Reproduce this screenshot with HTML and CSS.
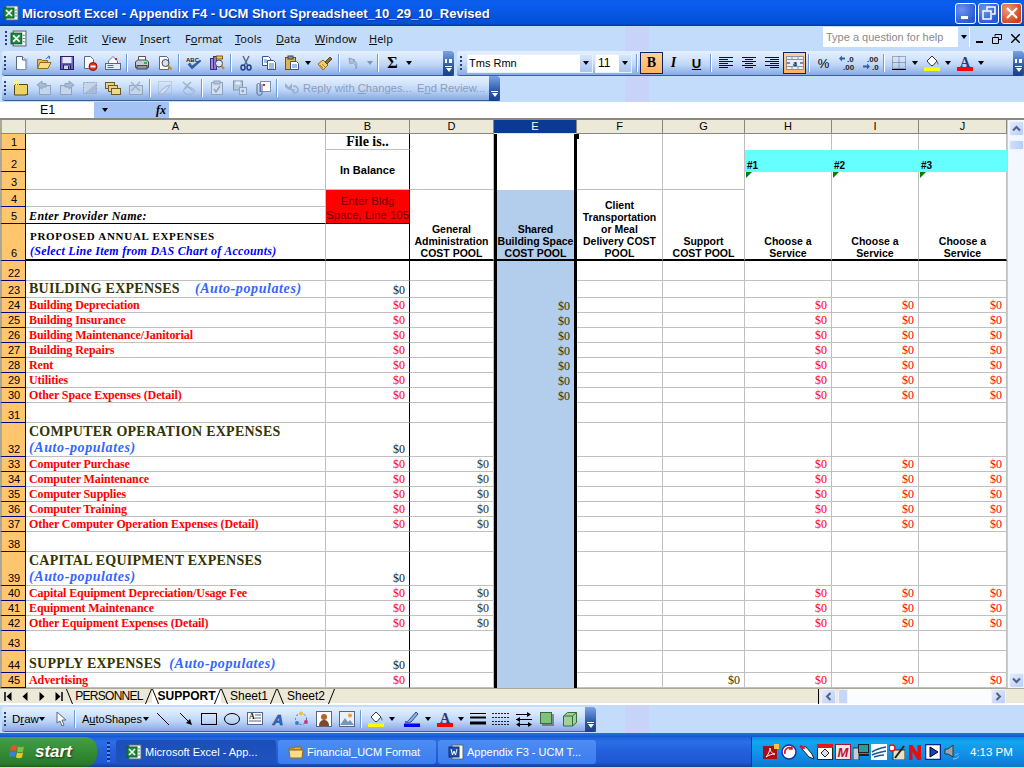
FILE: index.html
```html
<!DOCTYPE html>
<html lang="en">
<head>
<meta charset="utf-8">
<title>Microsoft Excel</title>
<link rel="stylesheet" href="styles.css">
</head>
<body>
<svg class="defs" width="0" height="0">
<symbol id="xl" viewBox="0 0 16 16"><rect x="3" y="1" width="12" height="14" fill="#fff" stroke="#567"/><rect x="1" y="3" width="10" height="10" fill="#1d8a3c" stroke="#0b5a22"/><path d="M3 5l6 6M9 5l-6 6" stroke="#fff" stroke-width="1.6"/><path d="M12 5h2M12 8h2M12 11h2" stroke="#3a9a55"/></symbol>
<symbol id="new" viewBox="0 0 16 16"><path d="M3.5 1.5h6l3.500 3.500v9.500h-9.500z" fill="#fff" stroke="#56688a"/><path d="M9.500 1.500v3.500h3.500" fill="#dfe8f6" stroke="#56688a"/><path d="M14 3v12H5" fill="none" stroke="#9db6dc"/></symbol>
<symbol id="open" viewBox="0 0 16 16"><path d="M1.500 13.500v-9h4l1 1h5v2" fill="#e7b94f" stroke="#8d6a1d"/><path d="M1.500 13.500l2.500-6h11l-3 6z" fill="#fbdc85" stroke="#8d6a1d"/><path d="M10 4c1-2 3-2.500 4-2M14 2l-2-1M14 2l-1 2" fill="none" stroke="#3e6f9f"/></symbol>
<symbol id="save" viewBox="0 0 16 16"><rect x="1.500" y="1.500" width="13" height="13" fill="#6a62c6" stroke="#26225f"/><rect x="3.500" y="2" width="9" height="6" fill="#e9e8f8"/><rect x="4.500" y="10" width="7" height="4.500" fill="#d4d4dc" stroke="#26225f"/><rect x="9" y="11" width="1.500" height="3" fill="#26225f"/></symbol>
<symbol id="perm" viewBox="0 0 16 16"><path d="M2.500 1.500h6l3 3v9h-9z" fill="#fff" stroke="#56688a"/><circle cx="11" cy="11.500" r="4" fill="#e5301c" stroke="#8b1208"/><rect x="8.500" y="10.500" width="5" height="2" fill="#fff"/></symbol>
<symbol id="mail" viewBox="0 0 16 16"><path d="M3.500 6l4.500-4.500 4.500 4.500v3h-9z" fill="#fff" stroke="#66789a"/><rect x="10" y="3" width="2" height="2" fill="#d23"/><rect x=".5" y="8.500" width="15" height="6" fill="#e6ecf6" stroke="#56688a"/><rect x="2.500" y="10" width="6" height="1" fill="#56688a"/><rect x="2.500" y="12" width="6" height="1" fill="#56688a"/></symbol>
<symbol id="print" viewBox="0 0 16 16"><path d="M4.500 5.500v-4h7v4" fill="#fff" stroke="#555"/><path d="M1.500 7l2-2h9l2 2v5.500h-13z" fill="#c6ccd6" stroke="#444"/><rect x="3" y="10.500" width="10" height="3.500" fill="#8e96a4" stroke="#444"/><rect x="10" y="7" width="3" height="2" fill="#16c42c"/></symbol>
<symbol id="prev" viewBox="0 0 16 16"><path d="M2.500 1.500h7l2 2v11h-9z" fill="#fff" stroke="#56688a"/><circle cx="8.500" cy="8" r="3.500" fill="#cfe0f5" stroke="#444"/><path d="M11 10.500l3.500 4" stroke="#c28a24" stroke-width="2"/></symbol>
<symbol id="res" viewBox="0 0 16 16"><rect x="1.500" y="3.500" width="3" height="11" fill="#9a86d4" stroke="#3d2f80"/><rect x="4.500" y="1.500" width="3" height="13" fill="#8e7ad0" stroke="#3d2f80"/><rect x="7.500" y="1" width="6" height="3" fill="#ecc766" stroke="#806018"/><circle cx="10" cy="8.500" r="3.500" fill="#dfeafa" stroke="#445"/><path d="M12.500 11l2.500 3" stroke="#c28a24" stroke-width="2"/></symbol>
<symbol id="cut" viewBox="0 0 16 16"><path d="M5 1l4.500 9M11 1L6.500 10" stroke="#5a6a80" stroke-width="1.500"/><ellipse cx="5" cy="12.500" rx="2" ry="2.500" fill="none" stroke="#233f8c" stroke-width="1.500"/><ellipse cx="11" cy="12.500" rx="2" ry="2.500" fill="none" stroke="#233f8c" stroke-width="1.500"/></symbol>
<symbol id="copy" viewBox="0 0 16 16"><path d="M1.500 1.500h6l2 2v7h-8z" fill="#fff" stroke="#35558f"/><path d="M6.500 5.500h6l2 2v7h-8z" fill="#fff" stroke="#35558f"/><path d="M8 9h5M8 11h5M8 13h5M3 5h3M3 7h3" stroke="#4a78c4"/></symbol>
<symbol id="paste" viewBox="0 0 16 16"><rect x="1.500" y="2.500" width="10" height="12" fill="#e2b24c" stroke="#6f5110"/><rect x="4" y="1" width="5" height="3" fill="#8a94a8" stroke="#444"/><path d="M6.500 6.500h6l2 2v6h-8z" fill="#fff" stroke="#35558f"/><path d="M8 10h5M8 12h5" stroke="#4a78c4"/></symbol>
<symbol id="brush" viewBox="0 0 16 16"><path d="M1 9l5-4 5 5-5 5z" fill="#f3cf6a" stroke="#8b6b1d"/><path d="M8 7l5-5 2 2-5 5z" fill="#8c6a3a" stroke="#5d4520"/><path d="M3 10l3 3M5 9l3 3" stroke="#b88a2a"/></symbol>
<symbol id="undo" viewBox="0 0 16 16"><path d="M4 9l-1-6 6 2-2 1c3 0 5 2 3 8 0-4-2-6-4-6z" fill="#b4c4dc" stroke="#8da0bf"/></symbol>
<symbol id="note" viewBox="0 0 16 16"><path d="M1.500 4.500h13v9l-1.500 1.500h-11.500z" fill="#efd362" stroke="#54471a"/><path d="M12 15l3-2v2z" fill="#54471a"/><path d="M3.500 0v6M.5 3h6M1 1l5 4M6 1L1 5" stroke="#fff37a"/></symbol>
<symbol id="gprev" viewBox="0 0 16 16"><rect x="3.500" y="5.500" width="11" height="9" fill="#c6d6ea" stroke="#8ea3c0"/><path d="M1 5l5-4v2.500h4v3.500H6v2z" fill="#a9bcd6" stroke="#8ea3c0"/></symbol>
<symbol id="gnext" viewBox="0 0 16 16"><rect x="1.500" y="5.500" width="11" height="9" fill="#c6d6ea" stroke="#8ea3c0"/><path d="M15 5l-5-4v2.500h-4v3.500h4v2z" fill="#a9bcd6" stroke="#8ea3c0"/></symbol>
<symbol id="gshow" viewBox="0 0 16 16"><rect x="1.500" y="2.500" width="13" height="11" fill="#c6d6ea" stroke="#8ea3c0" stroke-dasharray="2 1"/><path d="M2 13L14 4v9z" fill="#a9bcd6"/></symbol>
<symbol id="folders" viewBox="0 0 16 16"><rect x=".5" y="2.500" width="9" height="6" fill="#ecd07c" stroke="#6b5a22"/><rect x="3.500" y="5.500" width="9" height="6" fill="#ecd07c" stroke="#6b5a22"/><rect x="6.500" y="8.500" width="9" height="6" fill="#f0d98c" stroke="#6b5a22"/></symbol>
<symbol id="gdel" viewBox="0 0 16 16"><rect x="1.500" y="5.500" width="13" height="9" fill="#c6d6ea" stroke="#8ea3c0"/><path d="M3 2l9 9M12 2l-9 9" stroke="#9fb2cd" stroke-width="1.500"/></symbol>
<symbol id="gink" viewBox="0 0 16 16"><rect x="1.500" y="1.500" width="13" height="13" fill="none" stroke="#9fb2cd" stroke-dasharray="1 1"/><path d="M2 14c3-5 7-8 11-9-2 4-5 8-9 9z" fill="#d4e0f0" stroke="#9fb2cd"/></symbol>
<symbol id="gerase" viewBox="0 0 16 16"><path d="M3 2l10 9M11 2L4 9" stroke="#9fb2cd" stroke-width="1.500"/><ellipse cx="9" cy="11" rx="5.500" ry="3.500" fill="none" stroke="#9fb2cd"/></symbol>
<symbol id="gclip" viewBox="0 0 16 16"><rect x="2.500" y="2.500" width="11" height="12" fill="#d4e0f0" stroke="#8ea3c0"/><rect x="5" y="1" width="6" height="3" fill="#b7c7dd" stroke="#8ea3c0"/><path d="M5 9l2 3 4-6" fill="none" stroke="#8ea3c0" stroke-width="1.500"/></symbol>
<symbol id="gsave" viewBox="0 0 16 16"><rect x="1.500" y="1" width="9" height="9" fill="#b7c7dd" stroke="#7f93b0"/><rect x="3.500" y="1.500" width="5" height="3" fill="#e6eef8"/><rect x="7.500" y="7.500" width="7" height="7" fill="#d4e0f0" stroke="#8ea3c0"/><path d="M9 11h3M11 9.500v3" stroke="#7f93b0"/></symbol>
<symbol id="attach" viewBox="0 0 16 16"><rect x="5.500" y="1.500" width="10" height="10" fill="#fff" stroke="#7f93b0"/><path d="M8 5h2" stroke="#d23" stroke-width="2"/><path d="M7 4v9c0 3-5 3-5 0V5c0-2 3-2 3 0v7" fill="none" stroke="#56688a"/></symbol>
<symbol id="reply" viewBox="0 0 16 16"><path d="M1 3l4 4 3-4v7H5L1 7z" fill="#9db0cb"/><path d="M9 6c3 0 5 1 5 4 0 2-2 3-4 3l-2-3h3" fill="none" stroke="#9db0cb" stroke-width="1.600"/></symbol>
<symbol id="al" viewBox="0 0 16 14"><path d="M1 1.500h14M1 3.500h9M1 5.500h14M1 7.500h9M1 9.500h14M1 11.500h9" stroke="#111"/></symbol>
<symbol id="ac" viewBox="0 0 16 14"><path d="M1 1.500h14M4 3.500h8M1 5.500h14M4 7.500h8M1 9.500h14M4 11.500h8" stroke="#111"/></symbol>
<symbol id="ar" viewBox="0 0 16 14"><path d="M1 1.500h14M6 3.500h9M1 5.500h14M6 7.500h9M1 9.500h14M6 11.500h9" stroke="#111"/></symbol>
<symbol id="bord" viewBox="0 0 16 16"><path d="M1.500 1.500h13v12h-13zM8 1.500v12M1.500 7.500h13" fill="none" stroke="#667" stroke-dasharray="1 1"/><path d="M1 14.500h14" stroke="#000"/></symbol>
<symbol id="fill" viewBox="0 0 16 16"><path d="M3 6l5-5 5 5-4 4.500H7z" fill="#fff" stroke="#333"/><path d="M13 6c1.500 1 2 3 1 4-1-1-1-3-1-4z" fill="#3a7bd5"/><rect y="12.500" width="16" height="3.500" fill="#ff0"/></symbol>
<symbol id="lcol" viewBox="0 0 16 16"><path d="M1 11c2 0 3-1 4-2l7-8 2 2-7 8c-2 1-4 1-6 0z" fill="#8fb0e0" stroke="#2b4a8a"/><rect y="12.500" width="16" height="3.500" fill="#00f"/></symbol>
<symbol id="cursor" viewBox="0 0 16 16"><path d="M4 1v11l3-2 2 5 2-1-2-5h4z" fill="#fff" stroke="#56688a"/></symbol>
<symbol id="diag" viewBox="0 0 16 16"><circle cx="8" cy="8" r="5.500" fill="none" stroke="#56688a" stroke-dasharray="2 2"/><circle cx="8" cy="2.500" r="2" fill="#eec23a"/><circle cx="13" cy="11" r="2" fill="#c23a8a"/><circle cx="4" cy="12" r="2" fill="#3a7bd5"/></symbol>
<symbol id="clip" viewBox="0 0 16 16"><rect x=".5" y=".5" width="15" height="15" fill="#fff" stroke="#56688a"/><circle cx="8" cy="6" r="3" fill="#b5622e"/><path d="M3 15c0-5 3-6 5-6s5 1 5 6z" fill="#7a4a2a"/></symbol>
<symbol id="pic" viewBox="0 0 16 16"><rect x=".5" y=".5" width="15" height="15" fill="#e9f2fc" stroke="#56688a"/><path d="M1 14l5-7 3 4 2-2 4 5z" fill="#7a93b8"/><circle cx="11" cy="4.500" r="2" fill="#f0a030"/></symbol>
<symbol id="lstyle" viewBox="0 0 16 16"><path d="M0 2.500h16" stroke="#000"/><path d="M0 6.500h16" stroke="#000" stroke-width="2"/><path d="M0 12h16" stroke="#000" stroke-width="3"/></symbol>
<symbol id="dash" viewBox="0 0 18 16"><path d="M0 2.500h18M0 6.500h18M0 10.500h18M0 13.500h18" stroke="#222" stroke-dasharray="2 1"/></symbol>
<symbol id="arrows" viewBox="0 0 16 16"><path d="M0 3.500h14M0 8.500h16M2 13.500h12" stroke="#000"/><path d="M11 1l4 2.500-4 2.500zM4 6L0 8.500 4 11zM4 11l-4 2.500L4 16zM12 11l4 2.500-4 2.500z" fill="#000"/></symbol>
<symbol id="shadow" viewBox="0 0 16 16"><rect x="3" y="3" width="12" height="12" fill="#444" opacity=".55"/><rect x="1.500" y="1.500" width="11" height="11" fill="#7fc27a" stroke="#3a6a3a"/></symbol>
<symbol id="cube" viewBox="0 0 16 16"><path d="M1.500 5l4-3.500h9v10l-4 3.500h-9z" fill="#9fd29a" stroke="#3a6a3a"/><path d="M1.500 5h9v10M10.500 5l4-3.500" fill="none" stroke="#3a6a3a"/></symbol>
<symbol id="folderxp" viewBox="0 0 16 16"><path d="M1 4h5l1-1h6v3H1z" fill="#e2b23f" stroke="#8d6a1d"/><path d="M1 6h14l-1 8H2z" fill="#fbdc85" stroke="#8d6a1d"/></symbol>
<symbol id="wd" viewBox="0 0 16 16"><rect x="4" y="1" width="11" height="14" fill="#fff" stroke="#567"/><rect x="1" y="3" width="10" height="10" fill="#1f4fb0" stroke="#0f2c70"/><path d="M3 5l1.500 6 1.500-4 1.500 4L9 5" fill="none" stroke="#fff"/></symbol>
<symbol id="flag" viewBox="0 0 18 18"><path d="M2 3c2-1 4-1 6 0l-1 5c-2-1-4-1-6 0z" fill="#e8532b"/><path d="M9 3.500c2 1 4 1 6 0l-1 5c-2 1-4 1-6 0z" fill="#7dc242"/><path d="M1 9c2-1 4-1 6 0l-1 5c-2-1-4-1-6 0z" fill="#3a7fd8"/><path d="M8 9.500c2 1 4 1 6 0l-1 5c-2 1-4 1-6 0z" fill="#f6c81e"/></symbol>
<symbol id="t1" viewBox="0 0 16 16"><rect y="2" width="14" height="13" fill="#a80f10"/><path d="M3 13c2-2 4-6 4-9 0 3 2 6 5 6-3 0-6 1-9 3z" fill="none" stroke="#fff"/><path d="M11 0h5v5h-5z" fill="#f3c73a"/></symbol>
<symbol id="t2" viewBox="0 0 16 16"><circle cx="8" cy="8" r="7" fill="#fff" stroke="#1330b0" stroke-width="1.500"/><path d="M4 10a5 5 0 0 1 7-6M11 1v4H8" fill="none" stroke="#e01818" stroke-width="1.500"/></symbol>
<symbol id="t3" viewBox="0 0 16 16"><path d="M1 2l6 1 6 7 2 5-5-2-6-7z" fill="#fff" stroke="#222"/><path d="M1 2l4 0 1 3H3z" fill="#e01818"/></symbol>
<symbol id="t4" viewBox="0 0 16 16"><rect x=".5" y=".5" width="15" height="15" fill="#fff" stroke="#222"/><rect y="0" width="16" height="4" fill="#e01818"/><path d="M8 5l4 4-4 4-4-4z" fill="#dde" stroke="#222"/></symbol>
<symbol id="t6" viewBox="0 0 16 16"><rect y="4" width="6" height="12" fill="#c8ccd4" stroke="#333"/><rect x="5.500" y=".5" width="10" height="8" fill="#2f9a9a" stroke="#222"/><path d="M6 11h10" stroke="#222" stroke-width="2"/></symbol>
<symbol id="t7" viewBox="0 0 16 16"><rect width="16" height="16" fill="#fff"/><path d="M1 8c4-3 9-4 14-5M1 11c4-2 9-3 14-4M3 13c3-1 7-2 10-2" fill="none" stroke="#1a5a9a" stroke-width="1.600"/></symbol>
<symbol id="t8" viewBox="0 0 16 16"><rect x="4" y="6" width="12" height="10" fill="#e8e2c8" stroke="#333"/><path d="M6 14L15 2" stroke="#222" stroke-width="2"/><circle cx="3" cy="4" r="3" fill="#fff" stroke="#e01818" stroke-width="1.500"/></symbol>
<symbol id="t9" viewBox="0 0 16 16"><path d="M2 1h3.500l5 8V1H14v15h-3.500l-5-8v8H2z" fill="#e01010"/></symbol>
<symbol id="t10" viewBox="0 0 16 16"><rect x=".5" y=".5" width="15" height="15" fill="#fff" stroke="#10208a" stroke-width="1.500"/><path d="M5 3l8 5-8 5z" fill="#1540c8" stroke="#000"/></symbol>
<symbol id="t11" viewBox="0 0 16 16"><path d="M2 5h3l5-4v12L5 10H2z" fill="#9aa4ae" stroke="#333"/><path d="M12 11c2 0 3-1 3-2M10 15c3 0 5-1 6-3" fill="none" stroke="#9ac0f0"/></symbol>
<symbol id="nfirst" viewBox="0 0 9 9"><path d="M1.500 0v9" stroke="#000" stroke-width="1.500"/><path d="M8 0v9L3 4.500z" fill="#000"/></symbol>
<symbol id="nprev" viewBox="0 0 9 9"><path d="M7 0v9L2 4.500z" fill="#000"/></symbol>
<symbol id="nnext" viewBox="0 0 9 9"><path d="M2 0v9l5-4.500z" fill="#000"/></symbol>
<symbol id="nlast" viewBox="0 0 9 9"><path d="M1 0v9l5-4.500z" fill="#000"/><path d="M7.500 0v9" stroke="#000" stroke-width="1.500"/></symbol>
</svg>

<div class="app">
  <header class="title">
    <svg class="ticon"><use href="#xl"/></svg>
    <span class="ttext">Microsoft Excel - Appendix F4 - UCM Short Spreadsheet_10_29_10_Revised</span>
    <div class="caps">
      <button class="cap"><span class="minbar"></span></button>
      <button class="cap"><svg width="14" height="14" viewBox="0 0 14 14"><path d="M5 4V1h8v7h-3M1 5h8v8H1z" fill="none" stroke="#fff" stroke-width="1.500"/></svg></button>
      <button class="cap close"><svg width="12" height="12" viewBox="0 0 12 12"><path d="M1 1l10 10M11 1L1 11" stroke="#fff" stroke-width="2.200"/></svg></button>
    </div>
  </header>

  <div class="cmd">
    <nav class="menu">
      <i class="handle mh"></i>
      <svg class="micon"><use href="#xl"/></svg>
      <span class="mi m1"><u>F</u>ile</span>
      <span class="mi m2"><u>E</u>dit</span>
      <span class="mi m3"><u>V</u>iew</span>
      <span class="mi m4"><u>I</u>nsert</span>
      <span class="mi m5">F<u>o</u>rmat</span>
      <span class="mi m6"><u>T</u>ools</span>
      <span class="mi m7"><u>D</u>ata</span>
      <span class="mi m8"><u>W</u>indow</span>
      <span class="mi m9"><u>H</u>elp</span>
      <div class="ask"><span class="asktxt">Type a question for help</span><b class="askdd"><i class="tri-d"></i></b></div>
      <div class="wctl">
        <span class="wmin"></span>
        <svg width="10" height="10" viewBox="0 0 10 10"><path d="M3 2.500V.5h6.500v5H7M.5 3.500h6v6h-6z" fill="none" stroke="#000"/></svg>
        <svg width="9" height="9" viewBox="0 0 9 9"><path d="M0 0l9 9M9 0L0 9" stroke="#000" stroke-width="1.500"/></svg>
      </div>
    </nav>
    <div class="row">
      <div class="tb tb-std">
        <i class="handle"></i>
        <span class="b"><svg><use href="#new"/></svg></span>
        <span class="b"><svg><use href="#open"/></svg></span>
        <span class="b"><svg><use href="#save"/></svg></span>
        <span class="b"><svg><use href="#perm"/></svg></span>
        <span class="b"><svg><use href="#mail"/></svg></span>
        <i class="sep"></i>
        <span class="b"><svg><use href="#print"/></svg></span>
        <span class="b"><svg><use href="#prev"/></svg></span>
        <i class="sep"></i>
        <span class="b"><svg viewBox="0 0 16 16"><text x="0" y="6.500" class="svt">ABC</text><path d="M2 9.500l4 4.500 9-8-1-1-8 6-2-3z" fill="#2f5fb2" stroke="#1b3b78" stroke-width=".5"/></svg></span>
        <span class="b"><svg><use href="#res"/></svg></span>
        <i class="sep"></i>
        <span class="b"><svg><use href="#cut"/></svg></span>
        <span class="b"><svg><use href="#copy"/></svg></span>
        <span class="b"><svg><use href="#paste"/></svg></span>
        <span class="dd"><i class="tri-d"></i></span>
        <span class="b"><svg><use href="#brush"/></svg></span>
        <i class="sep"></i>
        <span class="b"><svg><use href="#undo"/></svg></span>
        <span class="dd"><i class="tri-d grey"></i></span>
        <i class="sep"></i>
        <span class="b sigma">Σ</span>
        <span class="dd"><i class="tri-d"></i></span>
        <span class="chev"><i class="cv-top"></i><i class="cv-line"></i><i class="tri-d wh"></i></span>
      </div>
      <div class="tb tb-fmt">
        <i class="handle"></i>
        <div class="combo font"><span>Tms Rmn</span><b class="cdd"><i class="tri-d"></i></b></div>
        <div class="combo size"><span>11</span><b class="cdd"><i class="tri-d"></i></b></div>
        <i class="sep"></i>
        <span class="b on bold">B</span>
        <span class="b ital">I</span>
        <span class="b und">U</span>
        <i class="sep"></i>
        <span class="b"><svg class="al"><use href="#al"/></svg></span>
        <span class="b"><svg class="al"><use href="#ac"/></svg></span>
        <span class="b"><svg class="al"><use href="#ar"/></svg></span>
        <span class="b on"><svg class="wide" viewBox="0 0 18 16"><rect x=".5" y="1.500" width="17" height="13" fill="#e8eef8" stroke="#8a96a8"/><path d="M0 4.500h18M0 11.500h18M6 1v3M12 1v3M6 12v3M12 12v3" stroke="#8a96a8"/><text x="9" y="10.600" class="svb" text-anchor="middle">a</text><path d="M1 8h3M17 8h-3" stroke="#223"/></svg></span>
        <i class="sep"></i>
        <span class="b pct">%</span>
        <span class="b"><svg class="wide" viewBox="0 0 18 16"><text x="9" y="6.500" class="svd">.0</text><text x="5" y="14.500" class="svd">.00</text><path d="M1 3.500l3-3v2h3v2H4v2z" fill="#2f5fb2"/></svg></span>
        <span class="b"><svg class="wide" viewBox="0 0 18 16"><text x="6" y="6.500" class="svd">.00</text><text x="11" y="14.500" class="svd">.0</text><path d="M9 11.500l-3-3v2H2v2h4v2z" fill="#2f5fb2"/></svg></span>
        <i class="sep"></i>
        <span class="b"><svg><use href="#bord"/></svg></span>
        <span class="dd"><i class="tri-d"></i></span>
        <span class="b"><svg><use href="#fill"/></svg></span>
        <span class="dd"><i class="tri-d"></i></span>
        <span class="b"><svg viewBox="0 0 16 16"><text x="8" y="11.500" class="sva" text-anchor="middle">A</text><rect y="12" width="16" height="4" fill="#f00"/></svg></span>
        <span class="dd"><i class="tri-d"></i></span>
        <span class="chev"><i class="cv-top"></i><i class="cv-line"></i><i class="tri-d wh"></i></span>
      </div>
    </div>
    <div class="row">
      <div class="tb tb-rev">
        <i class="handle"></i>
        <span class="b"><svg><use href="#note"/></svg></span>
        <span class="b"><svg><use href="#gprev"/></svg></span>
        <span class="b"><svg><use href="#gnext"/></svg></span>
        <span class="b"><svg><use href="#gshow"/></svg></span>
        <span class="b"><svg><use href="#folders"/></svg></span>
        <span class="b"><svg><use href="#gdel"/></svg></span>
        <i class="sep"></i>
        <span class="b"><svg><use href="#gink"/></svg></span>
        <span class="b"><svg><use href="#gerase"/></svg></span>
        <i class="sep"></i>
        <span class="b"><svg><use href="#gclip"/></svg></span>
        <span class="b"><svg><use href="#gsave"/></svg></span>
        <span class="b"><svg><use href="#attach"/></svg></span>
        <i class="sep"></i>
        <span class="b"><svg><use href="#reply"/></svg></span>
        <span class="gtxt rc">Reply with <u>C</u>hanges...</span>
        <span class="gtxt">E<u>n</u>d Review...</span>
        <span class="chev"><i class="cv-line"></i><i class="tri-d wh"></i></span>
      </div>
    </div>
  </div>

  <div class="fbar">
    <div class="namebox">E1</div>
    <div class="fbmid"><i class="tri-d"></i><span class="fx">fx</span></div>
    <div class="finput"></div>
  </div>

  <main class="sheet">
    <table class="grid">
      <colgroup><col class="c0"><col class="ca"><col class="cb"><col class="cd"><col class="ce"><col class="cf"><col class="cg"><col class="ch"><col class="ci"><col class="cj"></colgroup>
      <tr class="rh"><th class="corner"></th><th class="col">A</th><th class="col">B</th><th class="col">D</th><th class="col sel">E</th><th class="col">F</th><th class="col">G</th><th class="col">H</th><th class="col">I</th><th class="col">J</th></tr>
      <tr class="r16"><th>1</th><td rowspan="3"></td><td class="fileis bk">File is..</td><td rowspan="3"></td><td rowspan="3" class="e1"><span class="fillh"></span></td><td rowspan="3"></td><td rowspan="3"></td><td class="nb"></td><td class="nb"></td><td class="nb"></td></tr>
      <tr class="r22"><th>2</th><td rowspan="2" class="inbal bk">In Balance</td><td class="cy">#1</td><td class="cy">#2</td><td class="cy">#3</td></tr>
      <tr class="r18"><th>3</th><td class="nb tp"><i class="cmt"></i></td><td class="nb tp"><i class="cmt"></i></td><td class="nb tp"><i class="cmt"></i></td></tr>
      <tr class="r17"><th>4</th><td></td><td rowspan="2" class="red bk">Enter Bldg<br>Space, Line 105</td><td rowspan="3" class="hd">General<br>Administration<br>COST POOL</td><td rowspan="3" class="e hd">Shared<br>Building Space<br>COST POOL</td><td rowspan="3" class="hd">Client<br>Transportation<br>or Meal<br>Delivery COST<br>POOL</td><td rowspan="3" class="hd">Support<br>COST POOL</td><td rowspan="3" class="hd">Choose a<br>Service</td><td rowspan="3" class="hd">Choose a<br>Service</td><td rowspan="3" class="hd">Choose a<br>Service</td></tr>
      <tr class="r17"><th>5</th><td class="prov">Enter Provider Name:</td></tr>
      <tr class="r37"><th>6</th><td class="prop"><span class="pa">PROPOSED ANNUAL EXPENSES</span><br><span class="ps">(Select Line Item from DAS Chart of Accounts)</span></td><td class="thick bk"></td></tr>
      <tr class="r20"><th>22</th><td></td><td class="bk"></td><td></td><td class="e"></td><td></td><td></td><td></td><td></td><td></td></tr>
      <tr class="r17"><th>23</th><td class="sec">BUILDING EXPENSES<span class="auto a1">(Auto-populates)</span></td><td class="n k bk">$0</td><td></td><td class="e"></td><td></td><td></td><td></td><td></td><td></td></tr>
      <tr class="r15"><th>24</th><td class="l">Building Depreciation</td><td class="n bk">$0</td><td></td><td class="e n o">$0</td><td></td><td></td><td class="n">$0</td><td class="n">$0</td><td class="n">$0</td></tr>
      <tr class="r15"><th>25</th><td class="l">Building Insurance</td><td class="n bk">$0</td><td></td><td class="e n o">$0</td><td></td><td></td><td class="n">$0</td><td class="n">$0</td><td class="n">$0</td></tr>
      <tr class="r15"><th>26</th><td class="l">Building Maintenance/Janitorial</td><td class="n bk">$0</td><td></td><td class="e n o">$0</td><td></td><td></td><td class="n">$0</td><td class="n">$0</td><td class="n">$0</td></tr>
      <tr class="r15"><th>27</th><td class="l">Building Repairs</td><td class="n bk">$0</td><td></td><td class="e n o">$0</td><td></td><td></td><td class="n">$0</td><td class="n">$0</td><td class="n">$0</td></tr>
      <tr class="r15"><th>28</th><td class="l">Rent</td><td class="n bk">$0</td><td></td><td class="e n o">$0</td><td></td><td></td><td class="n">$0</td><td class="n">$0</td><td class="n">$0</td></tr>
      <tr class="r15"><th>29</th><td class="l">Utilities</td><td class="n bk">$0</td><td></td><td class="e n o">$0</td><td></td><td></td><td class="n">$0</td><td class="n">$0</td><td class="n">$0</td></tr>
      <tr class="r15"><th>30</th><td class="l">Other Space Expenses (Detail)</td><td class="n bk">$0</td><td></td><td class="e n o">$0</td><td></td><td></td><td class="n">$0</td><td class="n">$0</td><td class="n">$0</td></tr>
      <tr class="r20"><th>31</th><td></td><td class="bk"></td><td></td><td class="e"></td><td></td><td></td><td></td><td></td><td></td></tr>
      <tr class="r34"><th>32</th><td class="sec">COMPUTER OPERATION EXPENSES<br><span class="auto">(Auto-populates)</span></td><td class="n k bk">$0</td><td></td><td class="e"></td><td></td><td></td><td></td><td></td><td></td></tr>
      <tr class="r15"><th>33</th><td class="l">Computer Purchase</td><td class="n bk">$0</td><td class="n o">$0</td><td class="e"></td><td></td><td></td><td class="n">$0</td><td class="n">$0</td><td class="n">$0</td></tr>
      <tr class="r15"><th>34</th><td class="l">Computer Maintenance</td><td class="n bk">$0</td><td class="n o">$0</td><td class="e"></td><td></td><td></td><td class="n">$0</td><td class="n">$0</td><td class="n">$0</td></tr>
      <tr class="r15"><th>35</th><td class="l">Computer Supplies</td><td class="n bk">$0</td><td class="n o">$0</td><td class="e"></td><td></td><td></td><td class="n">$0</td><td class="n">$0</td><td class="n">$0</td></tr>
      <tr class="r15"><th>36</th><td class="l">Computer Training</td><td class="n bk">$0</td><td class="n o">$0</td><td class="e"></td><td></td><td></td><td class="n">$0</td><td class="n">$0</td><td class="n">$0</td></tr>
      <tr class="r15"><th>37</th><td class="l">Other Computer Operation Expenses (Detail)</td><td class="n bk">$0</td><td class="n o">$0</td><td class="e"></td><td></td><td></td><td class="n">$0</td><td class="n">$0</td><td class="n">$0</td></tr>
      <tr class="r20"><th>38</th><td></td><td class="bk"></td><td></td><td class="e"></td><td></td><td></td><td></td><td></td><td></td></tr>
      <tr class="r34"><th>39</th><td class="sec">CAPITAL EQUIPMENT EXPENSES<br><span class="auto">(Auto-populates)</span></td><td class="n k bk">$0</td><td></td><td class="e"></td><td></td><td></td><td></td><td></td><td></td></tr>
      <tr class="r15"><th>40</th><td class="l">Capital Equipment Depreciation/Usage Fee</td><td class="n bk">$0</td><td class="n o">$0</td><td class="e"></td><td></td><td></td><td class="n">$0</td><td class="n">$0</td><td class="n">$0</td></tr>
      <tr class="r15"><th>41</th><td class="l">Equipment Maintenance</td><td class="n bk">$0</td><td class="n o">$0</td><td class="e"></td><td></td><td></td><td class="n">$0</td><td class="n">$0</td><td class="n">$0</td></tr>
      <tr class="r15"><th>42</th><td class="l">Other Equipment Expenses (Detail)</td><td class="n bk">$0</td><td class="n o">$0</td><td class="e"></td><td></td><td></td><td class="n">$0</td><td class="n">$0</td><td class="n">$0</td></tr>
      <tr class="r20"><th>43</th><td></td><td class="bk"></td><td></td><td class="e"></td><td></td><td></td><td></td><td></td><td></td></tr>
      <tr class="r22"><th>44</th><td class="sec">SUPPLY EXPENSES<span class="auto a2">(Auto-populates)</span></td><td class="n k bk">$0</td><td></td><td class="e"></td><td></td><td></td><td></td><td></td><td></td></tr>
      <tr class="r15"><th>45</th><td class="l">Advertising</td><td class="n bk">$0</td><td></td><td class="e"></td><td></td><td class="n o">$0</td><td class="n">$0</td><td class="n">$0</td><td class="n">$0</td></tr>
    </table>
    <div class="vscroll">
      <span class="sbtn"><svg width="9" height="7" viewBox="0 0 9 7"><path d="M1 5.500l3.500-3.500 3.500 3.500" fill="none" stroke="#4d6185" stroke-width="2"/></svg></span>
      <span class="vthumb"></span>
      <span class="vtrack"></span>
      <span class="sbtn"><svg width="9" height="7" viewBox="0 0 9 7"><path d="M1 1.500L4.500 5 8 1.500" fill="none" stroke="#4d6185" stroke-width="2"/></svg></span>
    </div>
  </main>

  <div class="tabs">
    <div class="nav"><svg><use href="#nfirst"/></svg><svg><use href="#nprev"/></svg><svg><use href="#nnext"/></svg><svg><use href="#nlast"/></svg></div>
    <div class="tab t-p">PERSONNEL</div>
    <div class="tab t-s">SUPPORT</div>
    <div class="tab t-1">Sheet1</div>
    <div class="tab t-2">Sheet2</div>
    <div class="hs">
      <i class="hsplit"></i>
      <span class="sbtn"><svg width="7" height="9" viewBox="0 0 7 9"><path d="M5.500 1L2 4.500 5.500 8" fill="none" stroke="#4d6185" stroke-width="2"/></svg></span>
      <span class="hthumb"></span>
      <span class="htrack"></span>
      <span class="sbtn"><svg width="7" height="9" viewBox="0 0 7 9"><path d="M1.500 1L5 4.500 1.500 8" fill="none" stroke="#4d6185" stroke-width="2"/></svg></span>
    </div>
  </div>

  <div class="drawrow">
    <div class="tb tb-draw">
      <i class="handle"></i>
      <span class="dt dr">D<u>r</u>aw</span><span class="dd s"><i class="tri-d"></i></span>
      <span class="b cur"><svg><use href="#cursor"/></svg></span>
      <i class="sep"></i>
      <span class="dt as">A<u>u</u>toShapes</span><span class="dd s asd"><i class="tri-d"></i></span>
      <span class="b ln"><svg width="16" height="16" viewBox="0 0 16 16"><path d="M2 2l12 12" stroke="#000"/></svg></span>
      <span class="b"><svg width="16" height="16" viewBox="0 0 16 16"><path d="M2 2l11 11" stroke="#000"/><path d="M14 14l-6-2 4-4z" fill="#000"/></svg></span>
      <span class="b"><svg width="16" height="16" viewBox="0 0 16 16"><rect x=".5" y="2.500" width="15" height="11" fill="none" stroke="#000"/></svg></span>
      <span class="b"><svg width="16" height="16" viewBox="0 0 16 16"><ellipse cx="8" cy="8" rx="7.500" ry="5.500" fill="none" stroke="#000"/></svg></span>
      <span class="b"><svg viewBox="0 0 16 16"><rect x=".5" y="1.500" width="15" height="12" fill="#fff" stroke="#56688a"/><text x="2" y="7.500" class="svb">A</text><path d="M8 4h6M8 7h6M2 10h12" stroke="#56688a"/></svg></span>
      <span class="b"><svg viewBox="0 0 16 16"><text x="8" y="14" class="svw" text-anchor="middle">A</text></svg></span>
      <span class="b"><svg><use href="#diag"/></svg></span>
      <span class="b"><svg><use href="#clip"/></svg></span>
      <span class="b"><svg><use href="#pic"/></svg></span>
      <i class="sep"></i>
      <span class="b"><svg><use href="#fill"/></svg></span>
      <span class="dd"><i class="tri-d"></i></span>
      <span class="b lc"><svg><use href="#lcol"/></svg></span>
      <span class="dd"><i class="tri-d"></i></span>
      <span class="b"><svg viewBox="0 0 16 16"><text x="8" y="11.500" class="sva" text-anchor="middle">A</text><rect y="12" width="16" height="4" fill="#f00"/></svg></span>
      <span class="dd"><i class="tri-d"></i></span>
      <span class="b"><svg><use href="#lstyle"/></svg></span>
      <span class="b"><svg class="wide"><use href="#dash"/></svg></span>
      <span class="b"><svg><use href="#arrows"/></svg></span>
      <span class="b"><svg><use href="#shadow"/></svg></span>
      <span class="b"><svg><use href="#cube"/></svg></span>
      <span class="chev"><i class="cv-line"></i><i class="tri-d wh"></i></span>
    </div>
  </div>
  <div class="winedge"></div>

  <footer class="taskbar">
    <div class="start"><svg class="flag"><use href="#flag"/></svg><span>start</span></div>
    <i class="tgrip"></i>
    <div class="task active"><svg><use href="#xl"/></svg><span>Microsoft Excel - App...</span></div>
    <div class="task"><svg><use href="#folderxp"/></svg><span>Financial_UCM Format</span></div>
    <div class="task"><svg><use href="#wd"/></svg><span>Appendix F3 - UCM T...</span></div>
    <div class="tray">
      <svg><use href="#t1"/></svg><svg><use href="#t2"/></svg><svg><use href="#t3"/></svg><svg><use href="#t4"/></svg><svg viewBox="0 0 16 16"><rect x=".5" y=".5" width="15" height="15" fill="#f0e6e6" stroke="#b01030"/><text x="8" y="13" class="svm" text-anchor="middle">M</text></svg><svg><use href="#t6"/></svg><svg><use href="#t7"/></svg><svg><use href="#t8"/></svg><svg><use href="#t9"/></svg><svg><use href="#t10"/></svg><svg><use href="#t11"/></svg>
      <span class="clock">4:13 PM</span>
    </div>
  </footer>
</div>
</body>
</html>
```
FILE: styles.css
```css
*{box-sizing:border-box}
html,body{margin:0;padding:0;background:#c4dcfb}
body{font-family:"Noto Sans","Liberation Sans",sans-serif;font-size:11px;color:#000}
.defs{position:absolute}
.svt{font:bold 6px "Liberation Sans",sans-serif;fill:#222}
.svb{font:bold 8px "Liberation Serif",serif;fill:#111}
.svd{font:bold 8px "Liberation Sans",sans-serif;fill:#222}
.sva{font:bold 14px "Liberation Serif",serif;fill:#2b3a78}
.svw{font:bold italic 15px "Liberation Sans",sans-serif;fill:#2f6bd8;stroke:#1b3b78;stroke-width:.5px}
.svm{font:bold italic 13px "Liberation Sans",sans-serif;fill:#c01030}
.app{width:1024px;height:768px;display:flex;flex-direction:column;overflow:hidden}

/* title */
.title{height:26px;display:flex;align-items:center;padding-left:3px;background:linear-gradient(#0a5be0 0,#0a5ff0 8%,#0758e4 45%,#0452dd 70%,#034fd6 90%,#0339a8 100%);color:#fff}
.ticon{width:16px;height:16px;margin-right:3px}
.ttext{font:bold 13px "Liberation Sans",sans-serif;text-shadow:1px 1px 0 #0a2f96;white-space:nowrap}
.caps{margin-left:auto;display:flex;gap:2px;margin-right:2px}
.cap{width:21px;height:21px;padding:0;border:1px solid #fff;border-radius:3px;background:radial-gradient(circle at 30% 30%,#6c95ee,#2a59d8 75%);display:flex;align-items:center;justify-content:center}
.cap.close{background:radial-gradient(circle at 30% 30%,#ee9a7c,#d4421c 75%)}
.minbar{width:7px;height:3px;background:#fff;margin-top:9px;margin-right:2px}

/* command bars */
.cmd,.drawrow{background:linear-gradient(90deg,#c4dcfb 625px,#c8d3f9 625px,#c8d3f9 649px,#c4dcfb 649px)}
.cmd{height:76px}
.menu{height:25px;display:flex;align-items:center;padding-left:5px}
.handle{display:block;width:2px;height:15px;flex:none;background:repeating-linear-gradient(#27416f 0,#27416f 2px,transparent 2px,transparent 4px)}
.mh{margin-right:3px}
.micon{width:17px;height:17px;margin-right:9px}
.mi{font-size:11px;white-space:nowrap;color:#111}
.m1{width:32px}.m2{width:34px}.m3{width:38px}.m4{width:45px}.m5{width:50px}.m6{width:41px}.m7{width:39px}.m8{width:54px}.m9{width:40px}
.ask{margin-left:auto;width:147px;height:20px;background:#fff;display:flex;align-items:center;justify-content:space-between;margin:0 6px 3px auto;color:#8a8a8a;font:11px "Liberation Sans",sans-serif;padding-left:3px}
.askdd{width:12px;height:100%;background:#c4dcfb;display:flex;align-items:center;justify-content:center;border-right:1px solid #fff}
.wctl{display:flex;align-items:center;width:48px;gap:9px}
.wmin{width:7px;height:2px;background:#000;margin-top:7px}
.row{height:25px;display:flex}
.tb{height:25px;display:flex;align-items:center;padding-left:2px;margin-left:2px;border-radius:3px 0 0 3px;border-bottom:1px solid #3b619c;background:linear-gradient(#e4f0fe 0,#d4e5fc 30%,#bcd4f7 60%,#86a9e3 100%)}
.tb .handle{margin-right:3px}
.tb-std{width:452px}
.tb-fmt{margin-left:3px;flex:1;padding-left:3px}
.tb-fmt .handle{margin-right:5px}
.tb-rev{width:498px}
.tb-draw{width:594px}
.b{width:23px;height:22px;flex:none;display:flex;align-items:center;justify-content:center}
.b svg{width:16px;height:16px}
.b svg.wide{width:18px;height:16px}
.b svg.al{width:16px;height:14px}
.sep{width:6px;height:18px;flex:none;background:linear-gradient(#fff,#fff) 3px 0/1px 100% no-repeat,linear-gradient(#6f9ad8,#6f9ad8) 2px 0/1px 100% no-repeat}
.dd{width:10px;flex:none;display:flex;justify-content:center}
.dd.s{width:8px}
.tri-d{display:block;width:0;height:0;border-left:3.500px solid transparent;border-right:3.500px solid transparent;border-top:4px solid #000}
.tri-d.grey{border-top-color:#8095b5}
.tri-d.wh{border-top-color:#fff;margin-top:1px}
.chev{margin-left:auto;width:11px;height:25px;flex:none;display:flex;flex-direction:column;align-items:center;justify-content:flex-end;padding-bottom:4px;border-radius:0 3px 3px 0;background:linear-gradient(#7ba2e6,#2a58a8 60%,#1a3f8a)}
.cv-top{display:block;width:7px;height:4px;margin-bottom:3px;background:linear-gradient(90deg,#fff 0,#fff 30%,transparent 30%,transparent 60%,#fff 60%)}
.cv-line{display:block;width:7px;height:1px;background:#fff}
.sigma{font:bold 16px "Liberation Serif",serif}
.combo{display:flex;align-items:center;justify-content:space-between;height:19px;background:#fff;font:11px "Liberation Sans",sans-serif;padding-left:1px;margin-right:2px;border:1px solid #e8f0fc}
.combo.font{width:126px}
.combo.size{width:37px;font-size:12px;padding-left:2px}
.cdd{width:12px;height:100%;display:flex;align-items:center;justify-content:center;background:linear-gradient(#d6e6fd,#a9c4ef)}
.b.on{background:linear-gradient(#ffd596,#ffb060);outline:1px solid #0a246a;outline-offset:-1px}
.bold{font:bold 14px "Liberation Serif",serif}
.ital{font:italic bold 14px "Liberation Serif",serif;margin-left:-1px}
.und{font:bold 13px "Liberation Sans",sans-serif;text-decoration:underline}
.pct{font:13px "Liberation Sans",sans-serif}
.gtxt{color:#8c9db8;font:11.200px "Liberation Sans",sans-serif;white-space:nowrap}
.gtxt.rc{width:114px}
.fbar{height:16px;display:flex;background:#fff}
.namebox{width:94px;background:#fff;font:12.500px "Liberation Sans",sans-serif;padding-left:40px;line-height:17px}
.fbmid{width:75px;background:#a4c2f4;display:flex;align-items:center;padding-left:8px}
.fx{font:italic bold 12px "Liberation Serif",serif;margin-left:48px}
.finput{flex:1;background:#fff}

/* sheet */
.sheet{height:570px;display:flex;border-top:2px solid #8a887c;background:#fff}
.grid{border-collapse:separate;border-spacing:0;table-layout:fixed;width:1007px;height:568px;flex:none;background:#fff}
.c0{width:26px}.ca{width:300px}.cb{width:84px}.cd{width:84px}.ce{width:83px}.cf{width:86px}.cg{width:82px}.ch{width:87px}.ci{width:87px}.cj{width:88px}
.rh{height:14px}.r15{height:15px}.r16{height:16px}.r17{height:17px}.r18{height:18px}.r20{height:20px}.r22{height:22px}.r34{height:34px}.r37{height:37px}
th,td{padding:0;overflow:hidden;white-space:nowrap}
th{background:#ffc66e;border-right:1px solid #000080;border-bottom:1px solid #000080;border-left:2px solid #aca899;font:11px "Liberation Sans",sans-serif;text-align:center;vertical-align:bottom;line-height:13px;padding-left:1px}
th.col,th.corner{background:#ece9d8;border-left:0;border-right:1px solid #8a887c;border-bottom:1px solid #8a887c;font-weight:400;vertical-align:middle;padding:0}
th.corner{border-left:2px solid #aca899}
th.sel{background:#0a3a94;color:#fff;border-bottom:1px solid #ffe97a}
td{border-right:1px solid #c0c0c0;border-bottom:1px solid #c0c0c0;vertical-align:bottom;font:12px/13px "Liberation Serif",serif}
td.bk{border-right-color:#000}
td.nb{border-bottom:0}
.fileis{font:bold 14px/15px "Liberation Serif",serif;text-align:center}
.inbal{font:bold 11px "Liberation Sans",sans-serif;text-align:center;vertical-align:middle}
.red{background:#f00;color:#6b0000;font:11.500px/14px "Liberation Sans",sans-serif;text-align:center;border-bottom-color:#000;vertical-align:middle;padding-top:2px}
.hd{font:bold 10.500px/12px "Liberation Sans",sans-serif;text-align:center;border-bottom:2px solid #000}
.e,.e1{border-left:3px solid #000;border-right:3px solid #000;border-bottom:0}
.e{background:#b3cdec}
.e1{position:relative;overflow:visible}
.fillh{position:absolute;right:-5px;top:0;width:5px;height:5px;background:#000}
.e.hd{border-bottom:2px solid #000;border-right-color:#000}
.prov{font:italic bold 12px/13px "Liberation Serif",serif;padding-left:3px;border-bottom-color:#000;letter-spacing:.4px}
.prop{padding-left:4px;border-bottom:2px solid #000;line-height:15px}
.pa{font:bold 11px/15px "Liberation Serif",serif;letter-spacing:.7px}
.ps{font:italic bold 12px/15px "Liberation Serif",serif;color:#00f;letter-spacing:.25px}
.thick{border-bottom:2px solid #000}
.cy{background:#66ffff;border-right:0;border-bottom:0;font:bold 10px/12px "Liberation Sans",sans-serif;padding-left:2px}
.tp{vertical-align:top}
.cmt{display:block;width:0;height:0;margin-left:1px;border-top:6px solid #008000;border-right:6px solid transparent}
.sec{font:bold 14px/16px "Liberation Serif",serif;color:#333300;padding-left:3px;letter-spacing:.25px}
.auto{font:italic bold 14px/16px "Liberation Serif",serif;color:#3366ff;letter-spacing:.6px}
.a1{margin-left:15px}
.a2{margin-left:8px}
.l{color:#f00;font:bold 12px/13px "Liberation Serif",serif;padding-left:3px;letter-spacing:-.1px}
.n{text-align:right;padding-right:4px;color:#f00;font:12px/13px "Liberation Serif",serif}
.k{color:#222200}
.o{color:#333300}
.vscroll{width:17px;display:flex;flex-direction:column;align-items:center;background:#f3f7fe;border-left:1px solid #c8ccd4;padding:1px 0 0}
.sbtn{width:15px;height:15px;flex:none;background:linear-gradient(135deg,#e4ecfd,#b9cdf6);border:1px solid #eef3fe;border-radius:2px;display:flex;align-items:center;justify-content:center}
.vthumb{width:15px;height:10px;margin-top:4px;background:linear-gradient(90deg,#cfdefa,#b9cdf6);border:1px solid #eef3fe;border-radius:2px}
.vtrack{flex:1}

/* tabs */
.tabs{height:16px;display:flex;background:#ece9d8;border-bottom:1px solid #fff;font:12px/15px "Liberation Sans",sans-serif;border-top:1px solid #aca899}
.nav{width:66px;display:flex;align-items:center;padding-left:3px;gap:7px}
.nav svg{width:10px;height:9px;flex:none}
.tab{position:relative;text-align:center;height:15px;white-space:nowrap}
.tab::before,.tab::after{content:"";position:absolute;top:0;width:1px;height:15px;background:#000}
.tab::before{left:3px;transform:skewX(22deg)}
.tab::after{right:3px;transform:skewX(-22deg)}
.t-p{width:86px;letter-spacing:-.7px}
.t-s{width:69px;font-weight:700;background:#fff}
.t-1{width:56px}
.t-2{width:58px}
.hs{margin-left:auto;width:188px;display:flex;align-items:center;margin-right:18px}
.hsplit{width:1px;height:15px;background:#000;margin-right:2px}
.hthumb{width:10px;height:15px;margin-left:2px;background:#c6d6f8;border:1px solid #eef3fe;border-radius:2px}
.htrack{flex:1;height:15px;background:#fbfcfe}
.drawrow{height:29px;padding-top:2px;border-top:1px solid #fff}
.dt{font:11.500px "Liberation Sans",sans-serif;white-space:nowrap}
.dr{margin-left:3px;width:26px}
.cur{margin-left:3px}
.dt.as{margin-left:4px;width:57px;font-size:11px}
.asd{margin-left:3px}
.ln{margin-left:1px}
.lc{margin-left:3px}
.winedge{height:4px;background:linear-gradient(#2a6fe0,#0f55d8)}

/* taskbar */
.taskbar{height:30px;display:flex;align-items:center;background:linear-gradient(#1f5fd4,#2a6fe6 15%,#245edb 50%,#2058d2 85%,#163f9e)}
.start{width:97px;height:30px;border-radius:0 12px 12px 0;display:flex;align-items:center;padding-left:9px;background:linear-gradient(#4a9c4a,#3f9a3f 15%,#348a34 55%,#2a7a2a 90%,#1f5f1f);color:#fff;font:italic bold 17px "Liberation Sans",sans-serif;text-shadow:1px 1px 2px #143a14;flex:none}
.flag{width:18px;height:18px;margin-right:8px}
.tgrip{width:3px;height:20px;margin-left:10px;margin-right:6px;flex:none;background:repeating-linear-gradient(#0a2a80 0,#0a2a80 2px,#5a90ee 2px,#5a90ee 4px)}
.task{width:158px;height:24px;margin-right:2px;padding-left:10px;display:flex;align-items:center;color:#fff;font:11px "Liberation Sans",sans-serif;background:linear-gradient(#4d8cf2,#3c7dee);border-radius:3px;flex:none;white-space:nowrap}
.task svg{width:16px;height:16px;margin-right:3px;flex:none}
.task.active{background:linear-gradient(#1c4fb8,#1e52bd);width:160px}
.tray{margin-left:auto;width:273px;height:30px;display:flex;align-items:center;padding-left:11px;gap:2px;color:#fff;background:linear-gradient(#0c8bdf,#13a5ef 15%,#108fe6 60%,#0c78d0);border-left:1px solid #0a3f9a}
.tray svg{width:16px;height:16px;flex:none}
.clock{margin-left:9px;font:11.500px "Liberation Sans",sans-serif;white-space:nowrap}
```
